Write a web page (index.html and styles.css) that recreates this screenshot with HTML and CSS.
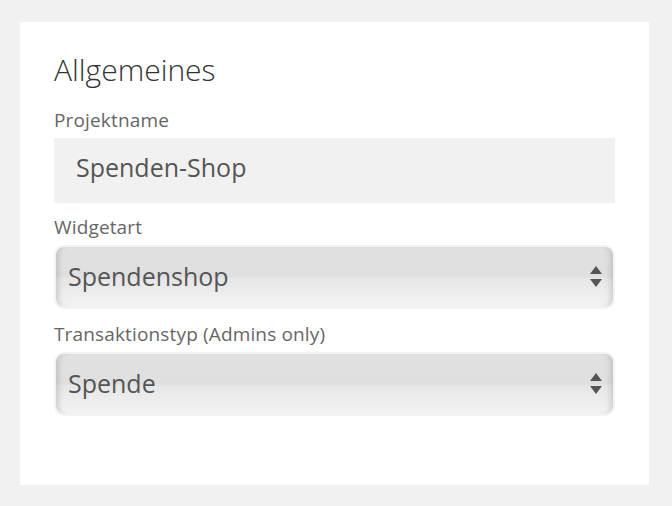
FILE: index.html
```html
<!DOCTYPE html>
<html lang="de">

<head>
    <meta charset="UTF-8">
    <meta name="viewport" content="width=device-width, initial-scale=1.0">
    <title>Allgemeines</title>
    <link rel="stylesheet" href="styles.css">
</head>

<body>
    <div class="card">
        <h2 class="card-title">Allgemeines</h2>

        <label class="field-label" for="projektname">Projektname</label>
        <input class="text-input" id="projektname" type="text" value="Spenden-Shop">

        <label class="field-label" for="widgetart">Widgetart</label>
        <div class="select-wrap">
            <select class="select-input" id="widgetart">
                <option>Spendenshop</option>
            </select>
            <svg class="select-arrows" width="12" height="21" viewBox="0 0 12 21">
                <path d="M6 0 L12 8 L0 8 Z" fill="#555" />
                <path d="M0 13 L12 13 L6 21 Z" fill="#555" />
            </svg>
        </div>

        <label class="field-label" for="transaktionstyp">Transaktionstyp (Admins only)</label>
        <div class="select-wrap">
            <select class="select-input" id="transaktionstyp">
                <option>Spende</option>
            </select>
            <svg class="select-arrows" width="12" height="21" viewBox="0 0 12 21">
                <path d="M6 0 L12 8 L0 8 Z" fill="#555" />
                <path d="M0 13 L12 13 L6 21 Z" fill="#555" />
            </svg>
        </div>
    </div>
</body>

</html>
```

FILE: styles.css
```css
body {
    margin: 0;
    padding: 22px 23px 21px 20px;
    font-family: "Open Sans", "Noto Sans", Arial, sans-serif;
    background-color: #f1f1f1;
    color: #555;
}

.card {
    box-sizing: border-box;
    height: 463px;
    padding: 28px 34px 0;
    background-color: #fff;
}

.card-title {
    margin: 0 0 19px;
    font-size: 30px;
    font-weight: 300;
    line-height: 40px;
    color: #333;
}

.field-label {
    display: block;
    margin-bottom: 7px;
    font-size: 19px;
    line-height: 22px;
    letter-spacing: 0.15px;
    color: #666;
}

.text-input {
    display: block;
    box-sizing: border-box;
    width: 100%;
    height: 65px;
    margin: 0 0 13px;
    padding: 0 22px 7px;
    border: 0;
    background-color: #f1f1f1;
    font-family: inherit;
    font-size: 25px;
    color: #555;
}

.select-wrap {
    position: relative;
    margin-bottom: 14px;
}

.select-input {
    display: block;
    box-sizing: border-box;
    width: 100%;
    height: 64px;
    padding: 0 40px 2px 12px;
    border: 2px solid #f3f3f3;
    border-radius: 10px;
    appearance: none;
    -webkit-appearance: none;
    background: linear-gradient(to bottom, #e1e1e1 0%, #dfdfdf 50%, #e6e6e6 52%, #f3f3f3 100%);
    box-shadow: inset 7px 0 6px -5px rgba(0, 0, 0, 0.16), inset -7px 0 6px -5px rgba(0, 0, 0, 0.16);
    font-family: inherit;
    font-size: 25px;
    color: #555;
}

.select-arrows {
    position: absolute;
    top: 21px;
    right: 13px;
}
```
